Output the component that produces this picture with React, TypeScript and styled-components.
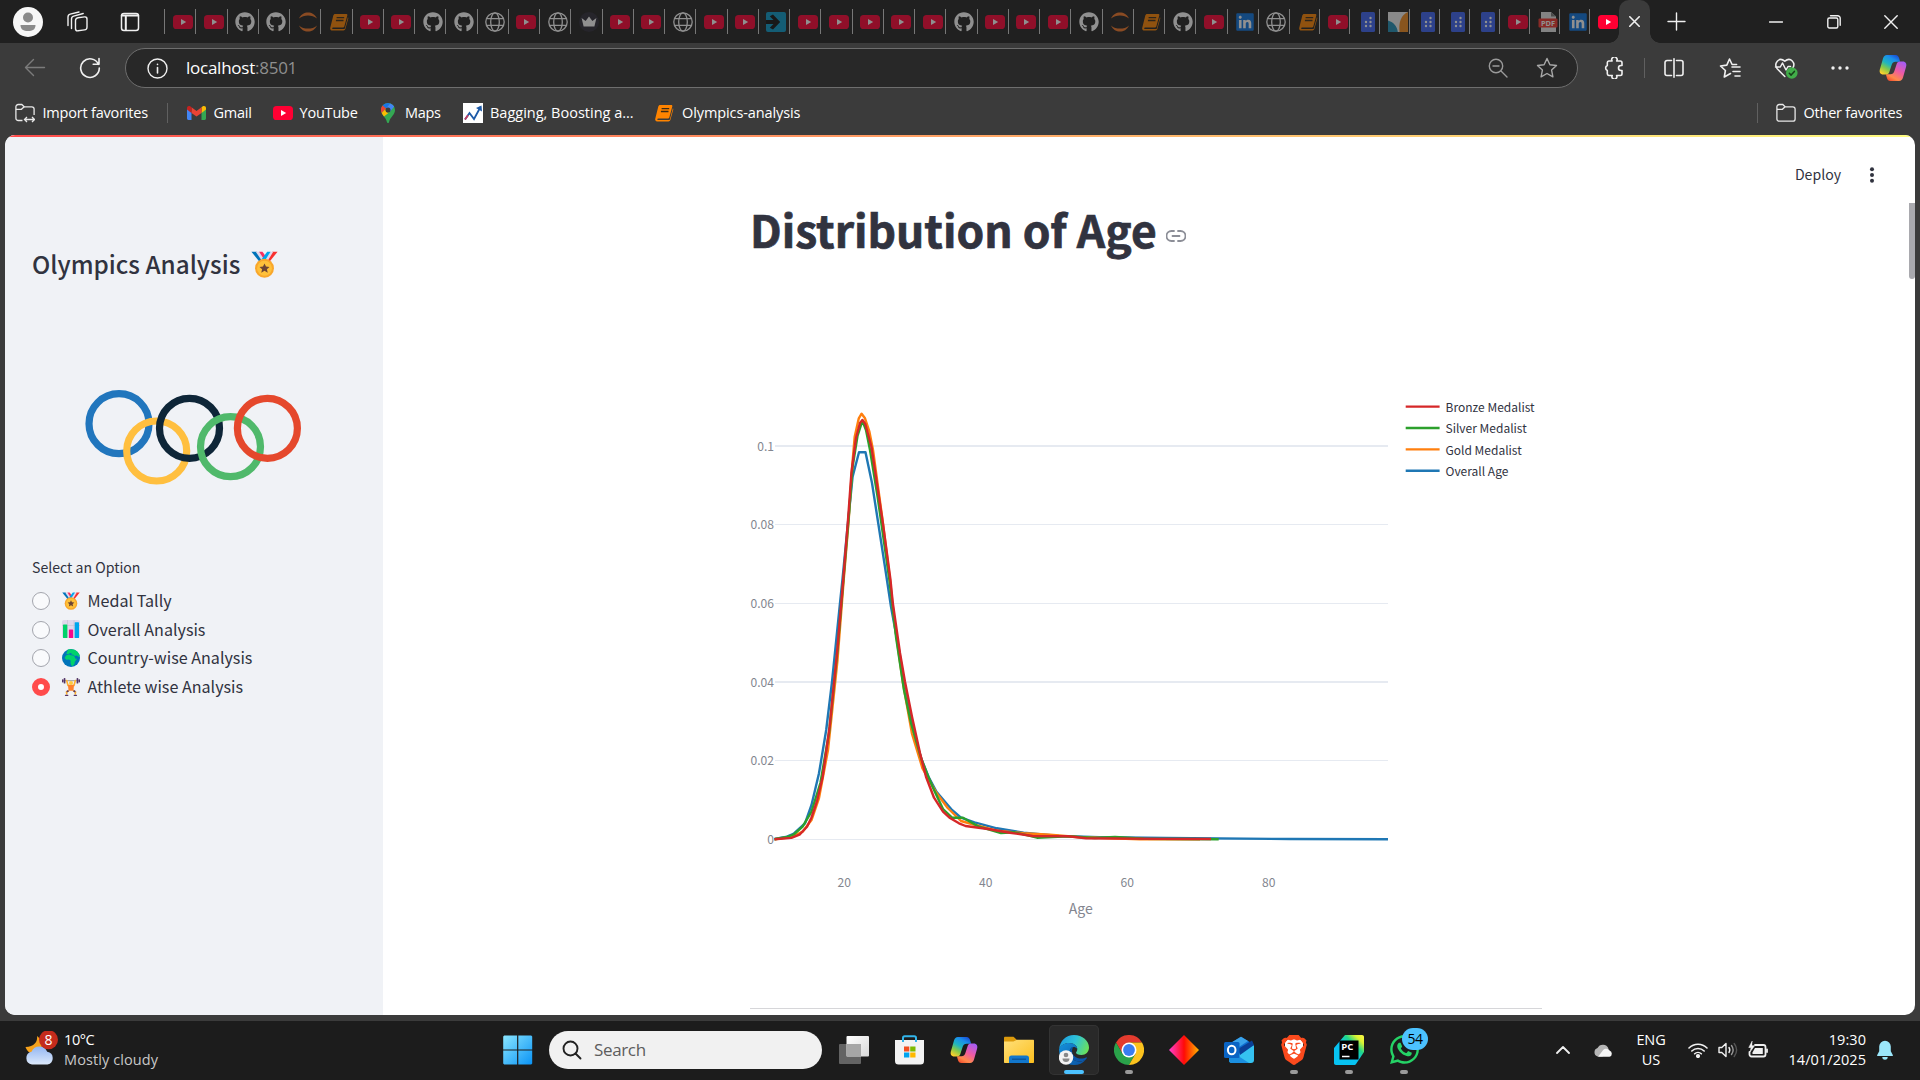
import React from "react";
import styled, { createGlobalStyle } from "styled-components";
import { FaGithub, FaWhatsapp, FaLinkedin } from "react-icons/fa";
import { SiBrave } from "react-icons/si";

const UI = `"Open Sans", "Noto Sans", sans-serif`;
const SOURCE = `"Noto Sans CJK SC", "Noto Sans", sans-serif`;

const GlobalStyle = createGlobalStyle`
  * { box-sizing: border-box; }
  html, body { margin: 0; padding: 0; overflow: hidden; background: #3b3b3b; }
  svg { display: block; flex: none; }
`;

const Screen = styled.div`
  width: 1920px;
  height: 1080px;
  display: flex;
  flex-direction: column;
  background: #3b3b3b;
  font-family: ${UI};
  overflow: hidden;
`;

/* ---------- browser chrome ---------- */

const TabStrip = styled.div`
  display: flex;
  align-items: center;
  height: 43px;
  padding-left: 13px;
  background: #202020;
`;

const Avatar = styled.div`
  width: 30px;
  height: 30px;
  border-radius: 50%;
  background: #f7f7f7;
  margin-right: 23px;
`;

const StripIcon = styled.div<{ $gap: number }>`
  margin-right: ${(p) => p.$gap}px;
`;

const TabCell = styled.div<{ $w: number; $bright?: boolean }>`
  flex: none;
  display: flex;
  align-items: center;
  width: ${(p) => p.$w}px;
  height: 25px;
  padding-left: ${(p) => (p.$w > 30.5 ? 7.6 : 7.9)}px;
  border-left: 1px solid #777;
  & > svg { opacity: ${(p) => (p.$bright ? 1 : 0.5)}; }
`;

const ActiveTab = styled.div`
  position: relative;
  flex: none;
  width: 31px;
  height: 43px;
  display: flex;
  align-items: center;
  justify-content: center;
  background: #3b3b3b;
  border-radius: 10px 10px 0 0;
  &::before, &::after {
    content: "";
    position: absolute;
    bottom: 0;
    width: 10px;
    height: 10px;
  }
  &::before { left: -10px; background: radial-gradient(circle at 0 0, transparent 9.5px, #3b3b3b 10px); }
  &::after { right: -10px; background: radial-gradient(circle at 100% 0, transparent 9.5px, #3b3b3b 10px); }
`;

const NewTab = styled.div`
  margin-left: 17px;
`;

const WindowControls = styled.div`
  margin-left: auto;
  display: flex;
  align-items: center;
  gap: 43.5px;
  padding-right: 22px;
`;

const Toolbar = styled.div`
  display: flex;
  align-items: center;
  height: 50px;
  padding-left: 23px;
`;

const NavButtons = styled.div`
  display: flex;
  align-items: center;
  gap: 32px;
  width: 102px;
`;

const AddressBar = styled.div`
  display: flex;
  align-items: center;
  width: 1453px;
  height: 40px;
  padding: 0 19px 0 21px;
  border: 1px solid #6e6e6e;
  border-radius: 20px;
  background: #282828;
`;

const Url = styled.div`
  flex: 1;
  margin-left: 18px;
  font-size: 17px;
  line-height: 24px;
  letter-spacing: -0.25px;
  color: #fff;
  span { color: #8f8f8f; }
`;

const AddressActions = styled.div`
  display: flex;
  align-items: center;
  gap: 28px;
`;

const ToolActions = styled.div`
  flex: 1;
  display: flex;
  align-items: center;
  padding-left: 25px;
`;

const ToolSlot = styled.div<{ $gap: number }>`
  display: flex;
  margin-right: ${(p) => p.$gap}px;
`;

const Rule = styled.div<{ $h: number; $after?: number }>`
  flex: none;
  width: 1px;
  height: ${(p) => p.$h}px;
  margin-right: ${(p) => p.$after ?? 0}px;
  background: #606060;
`;

const Bookmarks = styled.div`
  display: flex;
  align-items: center;
  height: 42px;
  padding: 0 17px 3px 15px;
`;

const Bookmark = styled.div<{ $gap: number; $w: number; $track?: number }>`
  display: flex;
  align-items: center;
  width: ${(p) => p.$w}px;
  gap: ${(p) => p.$gap}px;
  color: #fff;
  font-size: 14.5px;
  line-height: 20px;
  letter-spacing: ${(p) => p.$track ?? -0.2}px;
  white-space: nowrap;
`;

const Spacer = styled.div`
  flex: 1;
`;

/* ---------- streamlit page ---------- */

const Frame = styled.div`
  height: 886px;
  padding: 0 5px 6px;
`;

const Page = styled.div`
  position: relative;
  display: flex;
  width: 1910px;
  height: 880px;
  border-radius: 10px;
  overflow: hidden;
  background: #fff;
  font-family: ${SOURCE};
  color: #31333f;
  &::before {
    content: "";
    position: absolute;
    left: 0;
    top: 0;
    width: 100%;
    height: 2px;
    background: linear-gradient(90deg, #ff4b4b, #fffd80);
  }
`;

const Sidebar = styled.div`
  width: 378px;
  padding: 111px 0 0 27px;
  background: #f0f2f6;
`;

const SideTitle = styled.div`
  display: flex;
  align-items: center;
  height: 36px;
  gap: 11px;
  font-size: 24.25px;
  line-height: 36px;
  font-weight: 500;
  white-space: nowrap;
`;

const Rings = styled.svg`
  margin: 107px 0 0 53px;
`;

const RadioLabel = styled.div`
  margin: 72px 0 8.7px;
  font-size: 14.1px;
  line-height: 20px;
`;

const RadioRow = styled.div`
  display: flex;
  align-items: center;
  height: 28.7px;
  font-size: 16.1px;
  line-height: 28px;
  white-space: nowrap;
  & > svg { margin: 1px 7.5px 0 12px; }
`;

const Radio = styled.div<{ $on?: boolean }>`
  width: 18px;
  height: 18px;
  margin-top: 2px;
  border-radius: 50%;
  border: ${(p) => (p.$on ? "6px solid #ff4b4b" : "1px solid #a3a5ad")};
  background: ${(p) => (p.$on ? "#fff" : "#f9fafc")};
`;

const Main = styled.div`
  width: 1532px;
  display: flex;
  flex-direction: column;
`;

const AppHeader = styled.div`
  display: flex;
  justify-content: flex-end;
  align-items: center;
  height: 68px;
  padding: 10.5px 39px 0 0;
  gap: 27px;
  font-size: 14.1px;
  line-height: 20px;
  & > svg { margin-top: 1px; }
`;

const Body = styled.div`
  display: flex;
  justify-content: space-between;
  height: 812px;
`;

const Block = styled.div`
  width: 792px;
  margin-left: 367px;
`;

const Heading = styled.h1`
  display: flex;
  align-items: center;
  gap: 9.5px;
  height: 58px;
  margin: 0;
  padding-bottom: 5px;
  font-size: 44.35px;
  line-height: 53px;
  font-weight: 700;
  -webkit-text-stroke: 0.7px #31333f;
  white-space: nowrap;
  & > svg { margin-top: 13px; }
`;

const Divider = styled.div`
  height: 1px;
  background: #d6d6d9;
`;

const ScrollThumb = styled.div`
  width: 6px;
  height: 76px;
  border-radius: 0 0 3px 3px;
  background: #a9a9ae;
`;

/* ---------- taskbar ---------- */

const Taskbar = styled.div`
  display: flex;
  align-items: center;
  height: 59px;
  padding: 0 17px 2px 24px;
  background: #1c1c1c;
  color: #fff;
`;

const Weather = styled.div`
  display: flex;
  align-items: center;
  width: 479px;
  gap: 5px;
`;

const WeatherText = styled.div`
  display: flex;
  flex-direction: column;
  font-size: 14.5px;
  line-height: 20px;
  span:first-child { letter-spacing: -0.4px; }
  span:last-child { color: #c8c8c8; letter-spacing: 0.1px; }
`;

const SearchBox = styled.div`
  display: flex;
  align-items: center;
  width: 273px;
  height: 38px;
  margin: 0 7px 0 16px;
  padding-left: 13px;
  gap: 12px;
  border-radius: 19px;
  background: #f1f1f1;
  color: #5d5d5d;
  font-size: 17px;
  line-height: 24px;
  letter-spacing: -0.35px;
`;

const TaskTile = styled.div<{ $active?: boolean; $running?: boolean }>`
  position: relative;
  flex: none;
  display: flex;
  align-items: center;
  justify-content: center;
  width: 50px;
  height: 50px;
  margin-right: 5px;
  border-radius: 5px;
  background: ${(p) => (p.$active ? "#292929" : "transparent")};
  box-shadow: ${(p) => (p.$active ? "inset 0 0 0 1px #333" : "none")};
  &::after {
    content: "";
    position: absolute;
    bottom: 1px;
    width: ${(p) => (p.$active ? 20 : 8)}px;
    height: 4px;
    border-radius: 2px;
    background: ${(p) => (p.$active ? "#4cc2ff" : p.$running ? "#9a9a9a" : "transparent")};
  }
`;

const CountBadge = styled.div`
  position: absolute;
  left: 23px;
  top: 3px;
  width: 26px;
  height: 22px;
  border-radius: 11px;
  background: #4cc2ff;
  color: #000;
  font-size: 14px;
  line-height: 21px;
  text-align: center;
  letter-spacing: -0.4px;
`;

const Tray = styled.div`
  margin-left: auto;
  display: flex;
  align-items: center;
`;

const TraySlot = styled.div<{ $w: number }>`
  display: flex;
  align-items: center;
  justify-content: center;
  width: ${(p) => p.$w}px;
`;

const TrayText = styled.div<{ $w: number; $align: string; $track: number; $after?: number }>`
  display: flex;
  flex-direction: column;
  width: ${(p) => p.$w}px;
  margin-right: ${(p) => p.$after ?? 0}px;
  text-align: ${(p) => p.$align};
  font-size: 14.5px;
  line-height: 20px;
  letter-spacing: ${(p) => p.$track}px;
`;

/* ---------- icons ---------- */

const YouTubeIcon = () => (
  <svg width="20" height="20" viewBox="0 0 20 20">
    <rect x="0" y="3" width="20" height="14" rx="3.6" fill="#ff0033" />
    <path d="M8 7v6l5.2-3z" fill="#fff" />
  </svg>
);

const JupyterIcon = () => (
  <svg width="20" height="20" viewBox="0 0 20 20" fill="#f37726">
    <path d="M1 6.6C3 2.300 6.400.5 10 .5s7 1.800 9 6.100C16.500 4.400 13.400 3.500 10 3.500S3.500 4.400 1 6.600z" />
    <path d="M1 13.400c2 4.300 5.400 6.100 9 6.100s7-1.800 9-6.100c-2.500 2.200-5.600 3.100-9 3.100s-6.500-.9-9-3.100z" />
  </svg>
);

const BookIcon = () => (
  <svg width="20" height="20" viewBox="0 0 20 20">
    <path d="M6.200 2h11.100c.8 0 1.200.6 1 1.400l-3 11.200c-.2.700-.6 1-1.300 1H4.200c-1 0-1.400 1.500-.2 1.500h10.700c.7 0 1-.3 1.200-.9l3-11c.5.4.5.9.3 1.500l-2.800 10.100c-.3 1-1 1.700-2 1.700H3.300c-1.700 0-2.500-1.400-2-3L4.300 3.600C4.600 2.600 5.200 2 6.200 2z" fill="#ff8400" />
    <path d="M7.600 5.700h7.600M6.900 8.500h7.600" stroke="#3b2a15" strokeWidth="1.300" />
  </svg>
);

const GlobeIcon = () => (
  <svg width="20" height="20" viewBox="0 0 20 20" fill="none" stroke="#fff" strokeWidth="1.300">
    <circle cx="10" cy="10" r="9.200" />
    <ellipse cx="10" cy="10" rx="4.300" ry="9.200" />
    <path d="M1.700 6.700h16.600M1.700 13.300h16.600" />
  </svg>
);

const CrownIcon = () => (
  <svg width="20" height="20" viewBox="0 0 20 20">
    <circle cx="10" cy="10" r="10" fill="#2c2a36" />
    <path d="M2.600 6l4 3L10 4.500 13.400 9l4-3-2 8.500H4.600z" fill="#fff" />
  </svg>
);

const ArrowTileIcon = () => (
  <svg width="20" height="20" viewBox="0 0 20 20">
    <rect width="20" height="20" rx="2" fill="#0a9bc9" />
    <path d="M0 8h7.500L3.800 4.300 7 2.500l7.200 7.500L7 17.500l-3.200-1.800L7.500 12H0z" fill="#111" />
  </svg>
);

const BlueTileIcon = () => (
  <svg width="20" height="20" viewBox="0 0 20 20">
    <rect x="3" width="14" height="20" rx="1.500" fill="#3a63f3" />
    <g fill="#fff">
      <circle cx="12.500" cy="6" r="1.200" />
      <circle cx="8" cy="10" r="1.200" /><circle cx="12.500" cy="10" r="1.200" />
      <circle cx="8" cy="14" r="1.200" /><circle cx="12.500" cy="14" r="1.200" />
    </g>
  </svg>
);

const StripesIcon = () => (
  <svg width="20" height="20" viewBox="0 0 20 20">
    <rect width="20" height="20" fill="#f2f2f2" />
    <path d="M20 0v20h-8.500C10.500 10 13 3 20 0z" fill="#f18a1e" />
    <path d="M0 8.500c5 1.500 9 5 9.800 11.500H0z" fill="#1f8fb5" />
  </svg>
);

const PdfIcon = () => (
  <svg width="20" height="20" viewBox="0 0 20 20">
    <path d="M3 0h10l5 4.500V20H3z" fill="#e6e6e6" />
    <path d="M13 0l5 4.500h-5z" fill="#777" />
    <rect x="0.500" y="6.500" width="19" height="9" rx="1" fill="#f0342c" />
    <text x="10" y="13.700" fontSize="7.400" fontWeight="700" textAnchor="middle" fill="#fff" fontFamily="Open Sans, sans-serif">PDF</text>
  </svg>
);

const LinkedInIcon = () => (
  <svg width="20" height="20" viewBox="0 0 20 20">
    <rect x="2.500" y="2.500" width="15" height="15" fill="#fff" />
    <FaLinkedin size={20} color="#0a73e0" />
  </svg>
);

const tabIcons: Record<string, () => React.ReactElement> = {
  y: YouTubeIcon,
  g: () => <FaGithub size={20} color="#fff" />,
  j: JupyterIcon,
  b: BookIcon,
  w: GlobeIcon,
  c: CrownIcon,
  a: ArrowTileIcon,
  l: LinkedInIcon,
  t: BlueTileIcon,
  s: StripesIcon,
  p: PdfIcon,
};

const CopilotIcon = ({ size, id }: { size: number; id: string }) => (
  <svg width={size} height={size} viewBox="0 0 28 28">
    <defs>
      <linearGradient id={`${id}a`} x1="0.8" y1="0" x2="0.200" y2="1">
        <stop offset="0" stopColor="#1a4fd6" /><stop offset=".22" stopColor="#1a8fec" /><stop offset=".5" stopColor="#1fb5c0" /><stop offset=".72" stopColor="#7fc94d" /><stop offset="1" stopColor="#ffd02b" />
      </linearGradient>
      <linearGradient id={`${id}b`} x1="0.800" y1="0" x2="0.200" y2="1">
        <stop offset="0" stopColor="#a45cf5" /><stop offset=".45" stopColor="#ee5aa5" /><stop offset=".8" stopColor="#ff8a4a" /><stop offset="1" stopColor="#f4502f" />
      </linearGradient>
    </defs>
    <g transform="translate(0 .5)">
      <path d="M8 .5h8.500c2.300 0 3.300 1.500 4 4.500l.6 2.300h-4.600c-2 0-3.200 1-3.800 3L10.500 17c-.7 2.200-1.500 3-3.500 3H4.500C1 20 0 17.500 1 14.500L4 4C4.700 1.700 5.800.5 8 .5z" fill={`url(#${id}a)`} />
      <path d="M20 26.500h-8.500c-2.300 0-3.300-1.500-4-4.500l-.6-2.300h4.600c2 0 3.200-1 3.800-3L17.500 10c.7-2.200 1.500-3 3.500-3h2.500c3.500 0 4.500 2.500 3.500 5.500L24 23c-.7 2.300-1.800 3.500-4 3.500z" fill={`url(#${id}b)`} />
    </g>
  </svg>
);

const MedalEmoji = ({ size }: { size: number }) => (
  <svg width={size} height={size} viewBox="0 0 20 20">
    <path d="M.3.500h4l4.500 6-2.500 1.500z" fill="#0074ba" />
    <path d="M3.500.500h3L11 7l-2.500 1z" fill="#e1d8ec" />
    <path d="M6 .500h2.500l3.500 5-1.500 2z" fill="#f92f60" />
    <path d="M19.700.500h-4L11.200 6.500l2.500 1.500z" fill="#f8312f" />
    <path d="M16.500.500h-2L9.500 7l2.500 1z" fill="#e1d8ec" />
    <path d="M14.500.500H12L8 6l2 1.500z" fill="#00a6ed" />
    <circle cx="10" cy="12.800" r="7" fill="#f9a72b" />
    <circle cx="10" cy="12.800" r="5.500" fill="#ffc13a" />
    <path d="M10 9.200l1.100 2.300 2.600.3-1.900 1.700.6 2.600-2.400-1.400-2.400 1.400.6-2.600-1.900-1.700 2.600-.3z" fill="#6d4534" />
  </svg>
);

const BarsEmoji = () => (
  <svg width="18" height="18" viewBox="0 0 18 18">
    <rect width="18" height="18" rx="2" fill="#e1d8ec" />
    <path d="M0 5.500h18M5.500 0v18M12 0v18" stroke="#cdc4d6" strokeWidth=".8" />
    <rect x="1" y="4.500" width="4.300" height="13.500" rx=".6" fill="#00d26a" />
    <rect x="6.900" y="9.500" width="4.200" height="8.500" rx=".6" fill="#f70a8d" />
    <rect x="12.700" y="2.200" width="4.300" height="15.800" rx=".6" fill="#00a6ed" />
  </svg>
);

const EarthEmoji = () => (
  <svg width="18" height="18" viewBox="0 0 18 18">
    <circle cx="9" cy="9" r="9" fill="#0074ba" />
    <path d="M6 .6C8 0 10.500-.1 12.500.7c2.500 1 4.300 3 5.200 5.600l-1 1.700-1.700-1.500-2.200.6-1.500-1.300-2-.3.3-1.400-2 .2-1.500 1-1.800-.5z" fill="#00d26a" />
    <path d="M4 6.500l3-1 2 .8 3 .4 1.500 3h1.700l-2.400 3-.3 2.200-1.800 2-1.300-.3-.9-2.500.2-2.400-1.600-1.200-2.800.2L2.600 9z" fill="#00d26a" />
  </svg>
);

const LifterEmoji = () => (
  <svg width="18" height="18" viewBox="0 0 18 18">
    <path d="M1.500 2.700h15" stroke="#9b9b9b" strokeWidth="1" />
    <rect x="0" y="1.200" width="1.500" height="3.200" rx=".6" fill="#533566" /><rect x="1.700" y="0" width="1.700" height="5.600" rx=".7" fill="#533566" />
    <rect x="16.500" y="1.200" width="1.500" height="3.200" rx=".6" fill="#533566" /><rect x="14.600" y="0" width="1.700" height="5.600" rx=".7" fill="#533566" />
    <path d="M4.700 2.500L6 7.500M13.300 2.500L12 7.500" stroke="#ffb02e" strokeWidth="1.600" strokeLinecap="round" />
    <path d="M5.900 6.800h6.200l-.7 5.900H6.600z" fill="#ff822d" />
    <circle cx="9" cy="5" r="2" fill="#ffc83d" />
    <path d="M6.900 12.500l-2.500 1.500.5 2.500M11.100 12.500l2.500 1.500-.5 2.500" stroke="#ffb02e" strokeWidth="1.500" fill="none" />
    <path d="M6.500 12.800l-1.800.9M11.500 12.800l1.800.9" stroke="#533566" strokeWidth="1.800" />
    <path d="M3.500 17.300h2.300M12.200 17.300h2.300" stroke="#533566" strokeWidth="1.300" strokeLinecap="round" />
  </svg>
);

const FolderGlyph = ({ arrows }: { arrows?: boolean }) => (
  <svg width="20" height="20" viewBox="0 0 20 20" fill="none" stroke="#e8e8e8" strokeWidth="1.300">
    {arrows ? (
      <>
        <path d="M7.500 17.500H3.200A2.300 2.300 0 0 1 .9 15.200V3.800A2.300 2.300 0 0 1 3.200 1.500h3.600l2.400 2.300h7.600a2.300 2.300 0 0 1 2.300 2.300v6" />
        <path d="M.9 6.300h5.500L9.200 3.800M9.500 16.500h10M12 14l-2.500 2.500L12 19M17 14l2.500 2.500L17 19" />
      </>
    ) : (
      <path d="M.9 6.300h5.500l2.700-2.500M3.200 1.500h3.600l2.300 2.300h7.700a2.300 2.300 0 0 1 2.300 2.300v9.800a2.300 2.300 0 0 1-2.300 2.300H3.200A2.300 2.300 0 0 1 .9 15.900V3.800a2.300 2.300 0 0 1 2.300-2.300z" />
    )}
  </svg>
);

const GmailIcon = () => (
  <svg width="19" height="20" viewBox="0 0 19 20">
    <path d="M0 5.500l4.500 3.300V17H1.400C.6 17 0 16.400 0 15.600z" fill="#4285f4" />
    <path d="M19 5.500l-4.500 3.300V17h3.100c.8 0 1.400-.6 1.400-1.400z" fill="#34a853" />
    <path d="M14.500 4.300l1.300-1C17.200 2.300 19 3.200 19 5v1.500l-4.500 3.400z" fill="#fbbc04" />
    <path d="M4.500 9.900V4.300l5 3.700 5-3.700v5.600l-5 3.700z" fill="#ea4335" />
    <path d="M0 5c0-1.800 1.800-2.700 3.200-1.700l1.300 1v5.600L0 6.500z" fill="#c5221f" />
  </svg>
);

const MapsPin = () => (
  <svg width="14" height="20" viewBox="0 0 14 20">
    <path d="M7 0a7 7 0 0 0-7 7c0 5 5 7 6 12.300.3 1 1.700 1 2 0C9 14 14 12 14 7a7 7 0 0 0-7-7z" fill="#34a853" />
    <path d="M7 0a7 7 0 0 0-5.400 2.500l3.600 3L9.200.400A7 7 0 0 0 7 0z" fill="#1a73e8" />
    <path d="M1.600 2.500A7 7 0 0 0 .7 10l4.500-4.500z" fill="#ea4335" />
    <path d="M9.200.400L4.700 5.700a2.700 2.700 0 0 1 4.300 3L13.200 3.600A7 7 0 0 0 9.200.400z" fill="#4285f4" />
    <path d="M.7 10c.6 1.300 1.400 2.300 2.300 3.500L9 8.700a2.700 2.700 0 0 1-4-.2L4.500 6z" fill="#fbbc04" />
    <circle cx="7" cy="7" r="2.500" fill="#3b3b3b" />
  </svg>
);

const TrendIcon = () => (
  <svg width="20" height="20" viewBox="0 0 20 20">
    <rect width="20" height="20" fill="#fff" />
    <path d="M2 16.500L6.500 10l4.500 6 6.500-12" stroke="#1d5aa8" strokeWidth="1.800" fill="none" />
    <path d="M2 16.500l3-4.300" stroke="#c43b62" strokeWidth="1.800" />
    <path d="M13 5l5.500-2.500L19 8.500z" fill="#1d5aa8" />
  </svg>
);

const EdgeIcon = () => (
  <svg width="30" height="30" viewBox="0 0 30 30">
    <defs>
      <linearGradient id="edgeTop" x1="0" y1="0.300" x2="1" y2="0.600">
        <stop offset="0" stopColor="#1c9de0" /><stop offset=".5" stopColor="#2fc3d8" /><stop offset="1" stopColor="#6be25a" />
      </linearGradient>
      <linearGradient id="edgeLow" x1="0" y1="0" x2="1" y2="1">
        <stop offset="0" stopColor="#1593dd" /><stop offset="1" stopColor="#0a4f9e" />
      </linearGradient>
    </defs>
    <path d="M.2 14C.8 6 7 0 15 0c8.500 0 15 6 15 12.500 0 4.500-3.300 7.500-7.500 7.500-3.500 0-5.500-1.400-5.500-2.300 0-.7 1.300-1.300 1.300-3.700 0-3-3.300-6-8.300-6C5.500 8 1.800 10.500.2 14z" fill="url(#edgeTop)" />
    <path d="M.1 14C1.500 10.500 5.500 8 10 8c5 0 8.300 3 8.300 6-1-1.500-2.500-2-3.800-2-2.500 0-3.800 2.500-3.800 5.500 0 5 4.300 9 9.300 9 3 0 5-1 6.500-1.800C24 28 20 30 15 30 6.500 30-.4 23 .1 14z" fill="url(#edgeLow)" />
    <path d="M10.700 17.500c0 5 4.300 9 9.300 9 3 0 5-1 6.800-2 .9-.9 1.400-1.800.8-2.200-1.600.8-3.400 1.300-5.400 1.300-5.300 0-9.200-3.500-9.200-7.600 0-1.600.5-3 1.500-4-2.300 0-3.800 2.500-3.800 5.500z" fill="#0a57ab" />
    <ellipse cx="7" cy="22.500" rx="7.200" ry="7.300" fill="#f3f3f3" />
    <circle cx="7" cy="20" r="2.300" fill="#888" />
    <path d="M3.500 23.500h7c0 2.500-1.500 3.500-3.500 3.500s-3.500-1-3.500-3.500z" fill="#888" />
  </svg>
);

const ChromeIcon = () => (
  <svg width="30" height="30" viewBox="0 0 30 30">
    <path d="M2 7.500A15 15 0 0 1 28 7.500H15L8.500 18.700z" fill="#e33b2e" />
    <path d="M2 7.500A15 15 0 0 0 15 30l6.500-11.200h-13z" fill="#2aa24a" />
    <path d="M28 7.500A15 15 0 0 1 15 30l6.500-11.200L15 7.500z" fill="#fcc31e" />
    <circle cx="15" cy="15" r="7.500" fill="#fff" />
    <circle cx="15" cy="15" r="5.900" fill="#3a7df0" />
  </svg>
);

const StoreIcon = () => (
  <svg width="29" height="30" viewBox="0 0 29 30">
    <path d="M8 7V3c0-1 .6-1.700 1.700-1.700h9.600C20.400 1.300 21 2 21 3v4" stroke="#32b5ea" strokeWidth="2" fill="none" />
    <path d="M0 5h29v21a3.500 3.500 0 0 1-3.500 3.500h-22A3.500 3.500 0 0 1 0 26z" fill="#f3f3f3" />
    <path d="M8 7V5M21 7V5" stroke="#32b5ea" strokeWidth="2" />
    <rect x="9" y="11.500" width="5.300" height="5" fill="#f25022" /><rect x="15.200" y="11.500" width="5.300" height="5" fill="#7fba00" />
    <rect x="9" y="17.500" width="5.300" height="5" fill="#00a4ef" /><rect x="15.200" y="17.500" width="5.300" height="5" fill="#ffb900" />
  </svg>
);

const ExplorerIcon = () => (
  <svg width="30" height="28" viewBox="0 0 30 28">
    <defs>
      <linearGradient id="fold" x1="0" y1="0" x2="1" y2="1"><stop offset="0" stopColor="#ffe07a" /><stop offset="1" stopColor="#fcbf1e" /></linearGradient>
    </defs>
    <path d="M0 2c0-.8.500-1.300 1.300-1.300h8.200L13 4v6H0z" fill="#dc9a0c" />
    <path d="M0 5.500h9.500L13 3.800h16c.6 0 1 .4 1 1V26c0 .6-.4 1-1 1H1c-.6 0-1-.4-1-1z" fill="url(#fold)" />
    <path d="M5 27v-5a2.500 2.500 0 0 1 2.500-2.500h15A2.500 2.500 0 0 1 25 22v5z" fill="#1277cc" />
    <path d="M8 23.200h14" stroke="#0a4f92" strokeWidth="1.200" />
  </svg>
);

const TaskViewIcon = () => (
  <svg width="30" height="28" viewBox="0 0 30 28">
    <defs>
      <linearGradient id="tv" x1="0" y1="0" x2="1" y2="1"><stop offset="0" stopColor="#fff" /><stop offset="1" stopColor="#d8d8d8" /></linearGradient>
    </defs>
    <rect x="0" y="8" width="22" height="20" rx="1" fill="#636363" />
    <rect x="7.500" y="0" width="22.500" height="20.500" rx="1" fill="url(#tv)" />
    <rect x="7.500" y="8" width="14.500" height="12.500" fill="#a6a6a6" />
  </svg>
);

const DiamondIcon = () => (
  <svg width="30" height="30" viewBox="0 0 30 30">
    <defs>
      <linearGradient id="dia"><stop offset="0" stopColor="#ff3fd0" /><stop offset=".5" stopColor="#ff0a0a" /><stop offset=".55" stopColor="#ff1c00" /><stop offset="1" stopColor="#ffb400" /></linearGradient>
    </defs>
    <path d="M15 0l15 15-15 15L0 15z" fill="url(#dia)" />
  </svg>
);

const OutlookIcon = () => (
  <svg width="30" height="28" viewBox="0 0 30 28">
    <path d="M5 8L17 .8 29 8v4L17 20 5 14z" fill="#0f6fd0" />
    <path d="M5 8L17 .8 24 5 9 15z" fill="#3aa3ea" />
    <path d="M14 18L30 9v15a3 3 0 0 1-3 3H8a3 3 0 0 1-3-3z" fill="#35c2f1" />
    <path d="M5 14l20 13H8a3 3 0 0 1-3-3z" fill="#1b8fe0" />
    <path d="M14 13L28 4.500 30 9 16 19z" fill="#0a3f96" />
    <rect x="0" y="6" width="15.500" height="16" rx="1.500" fill="#0a64c4" />
    <ellipse cx="7.700" cy="14" rx="3.800" ry="4.300" fill="none" stroke="#fff" strokeWidth="2" />
  </svg>
);

const BraveIcon = () => (
  <svg width="30" height="30" viewBox="0 0 30 30">
    <path d="M9 4h12l3 3v10l-9 9-9-9V7z" fill="#fff" />
    <SiBrave size={30} color="#fb4a1d" />
  </svg>
);

const PyCharmIcon = () => (
  <svg width="30" height="30" viewBox="0 0 30 30">
    <defs>
      <linearGradient id="pyc" x1="0" y1="1" x2="1" y2="0"><stop offset=".5" stopColor="#07c3f2" /><stop offset=".68" stopColor="#21d789" /><stop offset=".85" stopColor="#dff231" /><stop offset="1" stopColor="#fcf84a" /></linearGradient>
    </defs>
    <path d="M11 0h17c1.200 0 2 .8 2 2v15L22 29c-.5.700-1 1-2 1H2c-1.200 0-2-.8-2-2V13z" fill="url(#pyc)" />
    <rect x="5.500" y="5.500" width="19" height="19" fill="#000" />
    <text x="7.300" y="15" fontSize="9.600" fontWeight="700" fill="#fff" fontFamily="Open Sans, sans-serif">PC</text>
    <path d="M8 21.500h7.500" stroke="#fff" strokeWidth="1.500" />
  </svg>
);

const WindowsIcon = () => (
  <svg width="30" height="30" viewBox="0 0 30 30">
    <defs>
      <linearGradient id="win" x1="0" y1="0" x2="1" y2="1"><stop offset="0" stopColor="#8ae6ff" /><stop offset="1" stopColor="#0a93f5" /></linearGradient>
    </defs>
    <path d="M1.200.500h12.900v13.900H.2V1.500zM15.300.500h12.900l1 1v12.900H15.300zM.2 15.600h13.900v13.900H1.200l-1-1zM15.300 15.600h13.900v12.900l-1 1H15.300z" fill="url(#win)" />
  </svg>
);

const WeatherIcon = () => (
  <svg width="35" height="37" viewBox="0 0 35 37">
    <defs>
      <linearGradient id="cloud" x1="0" y1="0" x2="0" y2="1"><stop offset="0" stopColor="#93b6f2" /><stop offset="1" stopColor="#dce9fb" /></linearGradient>
    </defs>
    <path d="M13 5c1 5.500-3 11-11.500 11C3.500 22 9 24 14 21.500S20 10 13 5z" fill="#f6a21c" />
    <path d="M8 33.500a6.500 6.500 0 0 1-.5-12.800 8.500 8.500 0 0 1 15.700 0A6.500 6.500 0 0 1 23.500 33.500z" fill="url(#cloud)" />
    <circle cx="24.500" cy="8.800" r="9.500" fill="#c42b1c" />
    <text x="24.500" y="13.800" fontSize="14" textAnchor="middle" fill="#fff" fontFamily="Open Sans, sans-serif">8</text>
  </svg>
);

/* ---------- chart ---------- */

const series = [
  {
    name: "Overall Age",
    color: "#1f77b4",
    points:
      "774.5,839 787,836.7 794,833.500 805,823.300 811.500,805 819,773.300 826.200,730 832,682 840,603 842.400,580 847.800,524.300 852.600,476.700 859,452.300 865.500,452.300 872,483 878.400,524.300 885,567 891,606.700 899,650 907,700 916,741 921.800,760 928.500,776.700 936.500,791.700 952,810 961,817.700 974.500,822.300 996.800,828.300 1023.600,832.700 1059,836 1099.500,837.300 1166,838 1290,839 1388,839.300",
  },
  {
    name: "Gold Medalist",
    color: "#ff7f0e",
    points:
      "774.5,839.300 791.400,837 802.600,831.700 811.500,820 819,798 828,750 837.500,660 843.700,580 848.700,520 852.200,466 854.700,436.700 858.800,418.300 861.600,413.700 865,418.300 869.400,431.700 873,450 882,516 890,580 895,626.700 903,683.300 911.900,733.300 922.500,768.300 936.500,793 947.700,808 961,821 979,826 996.800,830.700 1023.600,833.300 1050,834.700 1077,837 1139.600,839.300 1200,839.300",
  },
  {
    name: "Silver Medalist",
    color: "#2ca02c",
    points:
      "774.5,839.300 787,837 793.700,834.500 802.600,826.700 811.500,811.700 820.400,783 829,733 837.500,650 843.400,580 848.500,520 852.600,466.700 857.500,436 862.400,420.700 866,430 870,450 877.600,496.700 889.400,580 896,636.700 904,690 911,723 921,758 927.600,775 934,790 943,809 952,817.700 963,817.700 979,826.700 1001,833 1014.600,832.300 1037,837.700 1068,836.300 1095,838 1115,837 1144,838.700 1218.700,839.300",
  },
  {
    name: "Bronze Medalist",
    color: "#d62728",
    points:
      "774.5,839.300 791.400,837.900 799.500,834.700 807,826.700 811.500,817.500 817,801 822.700,776.700 829.600,726.700 837,653 843.200,580 848,520 851.400,473 856,438 860,423 862.400,420 865.300,424 871.400,446.700 883,524 890.500,580 892.800,603 900,653 905,681.700 912,716.700 920,753 926,776.700 934,797.700 943,811.700 950,818 959,823.300 965.500,826 988,829 1010,832.700 1032.500,836 1068,836.300 1086,838.300 1160,838.900 1211,839",
  },
];

const yTicks: [string, number][] = [["0.1", 446], ["0.08", 524.500], ["0.06", 603.500], ["0.04", 682], ["0.02", 760.500], ["0", 839.500]];
const xTicks: [string, number][] = [["20", 844.300], ["40", 985.700], ["60", 1127.300], ["80", 1268.700]];

const ChartSvg = styled.svg`
  font-family: ${SOURCE};
  font-size: 12.1px;
  .tick { fill: #83868f; }
  .title { fill: #83868f; font-size: 14px; }
  .legend { fill: #31333f; font-size: 12px; }
`;

const AgeChart = () => (
  <ChartSvg width="792" height="747" viewBox="750 261 792 747">
    {yTicks.map(([label, y]) => (
      <g key={label}>
        <line x1="775" x2="1388" y1={y} y2={y} stroke="#e6eaf1" strokeWidth={y % 1 ? 1.200 : 2} />
        <text className="tick" x="774" y={y + 4.800} textAnchor="end">{label}</text>
      </g>
    ))}
    {xTicks.map(([label, x]) => (
      <text className="tick" key={label} x={x} y="887" textAnchor="middle">{label}</text>
    ))}
    <text className="title" x="1080.700" y="914" textAnchor="middle">Age</text>
    {series.map((s) => (
      <polyline key={s.name} points={s.points} fill="none" stroke={s.color} strokeWidth="2.400" strokeLinejoin="round" />
    ))}
    {[...series].reverse().map((s, i) => (
      <g key={s.name}>
        <line x1="1405.700" x2="1439.600" y1={406.600 + i * 21.400} y2={406.600 + i * 21.400} stroke={s.color} strokeWidth="2.400" />
        <text className="legend" x="1445.500" y={412 + i * 21.400}>{s.name}</text>
      </g>
    ))}
  </ChartSvg>
);

/* ---------- page assembly ---------- */

const wideTabs = "yyggjbyyggwywcyywyyayyyyygyyygjbgylw".split("");
const narrowTabs = "bytstttypl".split("");

const rings = [
  { x: 119, y: 423.700, c: "#2176bd" },
  { x: 156.700, y: 451, c: "#ffbf3f" },
  { x: 189.500, y: 428.300, c: "#0e2638" },
  { x: 230.500, y: 446.700, c: "#50b96b" },
  { x: 267.400, y: 428.300, c: "#e5482c" },
];

const light = { fill: "none", stroke: "#f0f0f0", strokeWidth: 1.400, strokeLinecap: "round", strokeLinejoin: "round" } as const;

export default function App() {
  return (
    <Screen>
      <GlobalStyle />
      <TabStrip>
        <Avatar>
          <svg width="30" height="30" viewBox="0 0 30 30" fill="#8a8a8a">
            <circle cx="15" cy="10.500" r="5" />
            <path d="M7.500 18h15c0 4.500-3 6-7.500 6s-7.500-1.500-7.500-6z" />
          </svg>
        </Avatar>
        <StripIcon $gap={32}>
          <svg width="22" height="22" viewBox="0 0 22 22" {...light}>
            <rect x="9.500" y="6.500" width="11.500" height="13" rx="2.500" transform="skewY(-8) translate(0 2)" />
            <path d="M5.500 17.500V8a3 3 0 0 1 2.200-2.900l9.500-2.600M2 14.500V6a3 3 0 0 1 2.200-2.900L13 1" />
          </svg>
        </StripIcon>
        <StripIcon $gap={24}>
          <svg width="20" height="20" viewBox="0 0 20 20" {...light}>
            <rect x="1.500" y="1.500" width="17" height="17" rx="2.500" strokeWidth="1.500" />
            <path d="M1.800 3.500h16.400M5.800 5v13" strokeWidth="2" />
          </svg>
        </StripIcon>
        {wideTabs.map((k, i) => {
          const Icon = tabIcons[k];
          return <TabCell key={i} $w={31.250}><Icon /></TabCell>;
        })}
        {narrowTabs.map((k, i) => {
          const Icon = tabIcons[k];
          return <TabCell key={i} $w={30}><Icon /></TabCell>;
        })}
        <TabCell $w={30} $bright><YouTubeIcon /></TabCell>
        <ActiveTab>
          <svg width="11" height="11" viewBox="0 0 11 11" {...light} strokeWidth={1.600}><path d="M.8.8l9.400 9.400M10.200.8L.8 10.200" /></svg>
        </ActiveTab>
        <NewTab>
          <svg width="19" height="19" viewBox="0 0 19 19" {...light}><path d="M9.500 1v17M1 9.500h17" /></svg>
        </NewTab>
        <WindowControls>
          <svg width="14" height="14" viewBox="0 0 14 14" {...light}><path d="M.5 7h13" /></svg>
          <svg width="14" height="14" viewBox="0 0 14 14" {...light}>
            <rect x=".8" y="3" width="10" height="10" rx="1.500" />
            <path d="M3.500.8h7.200a2.500 2.500 0 0 1 2.500 2.500v7" />
          </svg>
          <svg width="14" height="14" viewBox="0 0 14 14" {...light}><path d="M.8.8l12.400 12.400M13.200.8L.8 13.200" /></svg>
        </WindowControls>
      </TabStrip>

      <Toolbar>
        <NavButtons>
          <svg width="24" height="20" viewBox="0 0 24 20" {...light} stroke="#7b7b7b"><path d="M2.500 9.500h19M10.500 1.500l-8 8 8 8" /></svg>
          <svg width="22" height="22" viewBox="0 0 22 22" {...light} strokeWidth={1.600}><path d="M19.500 7.300A9.300 9.300 0 1 0 20.300 11M20 1.500v5.800h-5.800" /></svg>
        </NavButtons>
        <AddressBar>
          <svg width="21" height="21" viewBox="0 0 21 21" {...light}>
            <circle cx="10.500" cy="10.500" r="9.500" />
            <path d="M10.500 9.500v5.500M10.500 6.200v.2" strokeWidth="1.600" />
          </svg>
          <Url>localhost<span>:8501</span></Url>
          <AddressActions>
            <svg width="20" height="20" viewBox="0 0 20 20" {...light} stroke="#9a9a9a"><circle cx="8" cy="8" r="6.700" /><path d="M5 8h6M13 13l6 6" /></svg>
            <svg width="22" height="22" viewBox="0 0 22 22" {...light} stroke="#a8a8a8"><path d="M11 1.500l2.900 6.200 6.600.8-4.900 4.600 1.300 6.700L11 16.500l-5.900 3.300 1.300-6.700-4.900-4.600 6.600-.8z" /></svg>
          </AddressActions>
        </AddressBar>
        <ToolActions>
          <ToolSlot $gap={19}>
            <svg width="22" height="22" viewBox="0 0 22 22" {...light} strokeWidth={1.600}><path d="M5.800 4h3.300a2.700 2.700 0 1 1 4.600 0h3.600a1.700 1.700 0 0 1 1.700 1.700V8.500h-1a2.500 2.500 0 0 0 0 5h1v3.300a1.700 1.700 0 0 1-1.700 1.700h-3.700a2.500 2.500 0 1 1-4.400 0H5.800a1.700 1.700 0 0 1-1.500-1.700V13.600a2.700 2.700 0 0 1 0-5V5.700A1.700 1.700 0 0 1 5.800 4z" /></svg>
          </ToolSlot>
          <Rule $h={20} $after={19} />
          <ToolSlot $gap={35}>
            <svg width="20" height="20" viewBox="0 0 20 20" {...light} strokeWidth={1.600}><path d="M10 .8v18.400M7.500 2.500H3A2 2 0 0 0 1 4.500v11a2 2 0 0 0 2 2h4.500M12.500 2.500H17a2 2 0 0 1 2 2v11a2 2 0 0 1-2 2h-4.500" /></svg>
          </ToolSlot>
          <ToolSlot $gap={33}>
            <svg width="22" height="22" viewBox="0 0 22 22" {...light} strokeWidth={1.600}><path d="M21 10h-8M21 14.500h-7M21 19h-5M11.500 16.500L5.300 20l1.100-6.500L1.500 9l6.300-.9L10.500 2l2.600 5.500h4.500" /></svg>
          </ToolSlot>
          <ToolSlot $gap={33}>
            <svg width="24" height="22" viewBox="0 0 24 22" {...light} strokeWidth={1.500}>
              <path d="M10.800 19.500L3.200 11.800C-.6 6.500 4.800-.8 10.800 4.200c6-5 11.300 2.200 7.800 7M1.500 10h4.800l2.200-4 3.500 7 2-3.500h2.500" />
              <circle cx="17.800" cy="16" r="5.800" fill="#41ad49" stroke="none" />
              <path d="M15.300 16.300l1.800 1.800 3.300-3.700" stroke="#153d18" />
            </svg>
          </ToolSlot>
          <ToolSlot $gap={30}>
            <svg width="18" height="6" viewBox="0 0 18 6" fill="#f0f0f0"><circle cx="2" cy="3" r="1.700" /><circle cx="9" cy="3" r="1.700" /><circle cx="16" cy="3" r="1.700" /></svg>
          </ToolSlot>
          <CopilotIcon size={28} id="ct" />
        </ToolActions>
      </Toolbar>

      <Bookmarks>
        <Bookmark $gap={7.5} $w={152} $track={-0.2}><FolderGlyph arrows />Import favorites</Bookmark>
        <Rule $h={20} $after={19} />
        <Bookmark $gap={7.5} $w={86} $track={-0.25}><GmailIcon />Gmail</Bookmark>
        <Bookmark $gap={6.5} $w={108} $track={-0.2}><YouTubeIcon />YouTube</Bookmark>
        <Bookmark $gap={10} $w={82} $track={-0.35}><MapsPin />Maps</Bookmark>
        <Bookmark $gap={7} $w={191} $track={0}><TrendIcon />Bagging, Boosting a...</Bookmark>
        <Bookmark $gap={8} $w={160} $track={-0.1}><BookIcon />Olympics-analysis</Bookmark>
        <Spacer />
        <Rule $h={20} $after={18} />
        <Bookmark $gap={7.5} $w={127} $track={-0.22}><FolderGlyph />Other favorites</Bookmark>
      </Bookmarks>

      <Frame>
        <Page>
          <Sidebar>
            <SideTitle>Olympics Analysis<MedalEmoji size={27} /></SideTitle>
            <Rings width="220" height="96" viewBox="85 389 220 96" fill="none">
              {rings.map((r) => (
                <circle key={r.c} cx={r.x} cy={r.y} r="30" stroke={r.c} strokeWidth="7.200" />
              ))}
            </Rings>
            <RadioLabel>Select an Option</RadioLabel>
            <RadioRow><Radio /><MedalEmoji size={18} />Medal Tally</RadioRow>
            <RadioRow><Radio /><BarsEmoji />Overall Analysis</RadioRow>
            <RadioRow><Radio /><EarthEmoji />Country-wise Analysis</RadioRow>
            <RadioRow><Radio $on /><LifterEmoji />Athlete wise Analysis</RadioRow>
          </Sidebar>
          <Main>
            <AppHeader>
              Deploy
              <svg width="8" height="16" viewBox="0 0 8 16" fill="#31333f"><circle cx="4" cy="2.300" r="2" /><circle cx="4" cy="8" r="2" /><circle cx="4" cy="13.700" r="2" /></svg>
            </AppHeader>
            <Body>
              <Block>
                <Heading>
                  Distribution of Age
                  <svg width="20" height="12" viewBox="0 0 20 12" fill="none" stroke="#8c8e97" strokeWidth="1.800" strokeLinecap="round">
                    <path d="M8 1H5.500a5 5 0 0 0 0 10H8M12 1h2.500a5 5 0 0 1 0 10H12M6.500 6h7" />
                  </svg>
                </Heading>
                <AgeChart />
                <Divider />
              </Block>
              <ScrollThumb />
            </Body>
          </Main>
        </Page>
      </Frame>

      <Taskbar>
        <Weather>
          <WeatherIcon />
          <WeatherText><span>10°C</span><span>Mostly cloudy</span></WeatherText>
        </Weather>
        <WindowsIcon />
        <SearchBox>
          <svg width="20" height="20" viewBox="0 0 20 20" fill="none" stroke="#222" strokeWidth="1.900" strokeLinecap="round"><circle cx="8.500" cy="8.500" r="7" /><path d="M13.500 13.500l5 5" /></svg>
          Search
        </SearchBox>
        <TaskTile><TaskViewIcon /></TaskTile>
        <TaskTile><StoreIcon /></TaskTile>
        <TaskTile><CopilotIcon size={28} id="cb" /></TaskTile>
        <TaskTile><ExplorerIcon /></TaskTile>
        <TaskTile $active><EdgeIcon /></TaskTile>
        <TaskTile $running><ChromeIcon /></TaskTile>
        <TaskTile><DiamondIcon /></TaskTile>
        <TaskTile><OutlookIcon /></TaskTile>
        <TaskTile $running><BraveIcon /></TaskTile>
        <TaskTile $running><PyCharmIcon /></TaskTile>
        <TaskTile $running><FaWhatsapp size={33} color="#25d366" /><CountBadge>54</CountBadge></TaskTile>
        <Tray>
          <TraySlot $w={30}>
            <svg width="14" height="8" viewBox="0 0 14 8" {...light} strokeWidth={1.800}><path d="M1 7l6-6 6 6" /></svg>
          </TraySlot>
          <TraySlot $w={50}>
            <svg width="20" height="14" viewBox="0 0 20 14">
              <path d="M4.500 13.500A4.500 4.500 0 0 1 4.500 5 6 6 0 0 1 15.500 5.500l-6 8z" fill="#b5b5b5" />
              <path d="M5 13.800l5-6.500c2-2.500 6-1.500 6.500.2a3.300 3.300 0 0 1 0 6.300z" fill="#f5f5f5" />
            </svg>
          </TraySlot>
          <TrayText $w={46} $align="center" $track={-0.1} $after={10}><span>ENG</span><span>US</span></TrayText>
          <TraySlot $w={28}>
            <svg width="20" height="16" viewBox="0 0 20 16" {...light} strokeWidth={1.600}><path d="M1 6a12.700 12.700 0 0 1 18 0M3.800 9a8.800 8.800 0 0 1 12.400 0M6.700 11.800a4.700 4.700 0 0 1 6.600 0" /><circle cx="10" cy="14" r="1.300" fill="#f0f0f0" /></svg>
          </TraySlot>
          <TraySlot $w={31}>
            <svg width="20" height="16" viewBox="0 0 20 16" {...light}><path d="M1 5.500h2.800L8 1.500v13l-4.200-4H1z" /><path d="M11 5.500c1 1.500 1 3.500 0 5" /><path d="M13.500 3.500c2 2.700 2 6.300 0 9" stroke="#999" /><path d="M16.200 1.500c3 4 3 9 0 13" stroke="#555" /></svg>
          </TraySlot>
          <TraySlot $w={30}>
            <svg width="20" height="18" viewBox="0 0 20 18" {...light}>
              <path d="M7 4h8.500a2 2 0 0 1 2 2v7.500a2 2 0 0 1-2 2H3.500a2 2 0 0 1-2-2V11" strokeWidth="1.800" />
              <path d="M4.500 13V11.500L7 7h7.800v6z" fill="#f0f0f0" stroke="none" />
              <path d="M19 8.500v2.500" strokeWidth="1.800" />
              <path d="M4 .5L.8 6.500h2.400L2 11l4.500-6.300H4z" fill="#f0f0f0" strokeWidth=".6" />
            </svg>
          </TraySlot>
          <TrayText $w={93} $align="right" $track={0.05}><span>19:30</span><span>14/01/2025</span></TrayText>
          <TraySlot $w={37}>
            <svg width="18" height="20" viewBox="0 0 18 20" fill="#9be7fb"><path d="M9 .8a5.800 5.800 0 0 1 5.800 5.800v4.600l2 3.800c.3.600 0 1-.6 1H1.800c-.6 0-.9-.4-.6-1l2-3.800V6.600A5.800 5.800 0 0 1 9 .8zM6.300 17h5.400a2.700 2.700 0 0 1-5.400 0z" /></svg>
          </TraySlot>
        </Tray>
      </Taskbar>
    </Screen>
  );
}
